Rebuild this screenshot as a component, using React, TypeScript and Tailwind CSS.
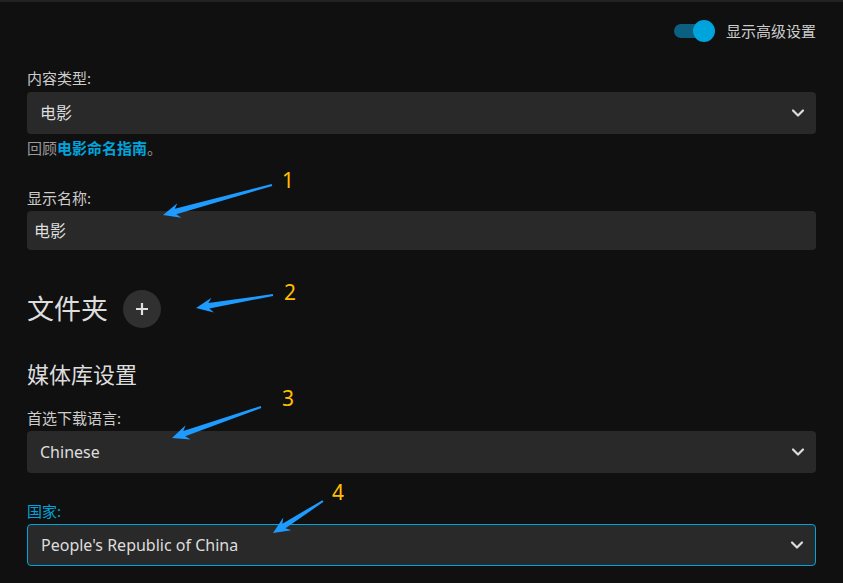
import { ChevronDown } from 'lucide-react';

const font = { fontFamily: '"Noto Sans", "Noto Sans CJK SC", sans-serif' };

interface Arrow {
  tail: [number, number];
  tip: [number, number];
  label: string;
  lx: number;
  ly: number;
}

const arrows: Arrow[] = [
  { tail: [272, 185], tip: [163, 215], label: '1', lx: 282, ly: 188 },
  { tail: [273, 295], tip: [196, 308], label: '2', lx: 284, ly: 300 },
  { tail: [261, 407], tip: [172, 438], label: '3', lx: 282, ly: 406 },
  { tail: [323, 501], tip: [273, 533], label: '4', lx: 332, ly: 500 },
];

function ArrowShape({ a }: { a: Arrow }) {
  const dx = a.tip[0] - a.tail[0];
  const dy = a.tip[1] - a.tail[1];
  const len = Math.sqrt(dx * dx + dy * dy);
  const angle = (Math.atan2(dy, dx) * 180) / Math.PI;
  const pts = [
    [0, -1],
    [len - 13, -2.8],
    [len - 17, -7.5],
    [len, 0],
    [len - 17, 7.5],
    [len - 13, 2.8],
    [0, 1],
  ]
    .map((p) => p.join(','))
    .join(' ');
  return (
    <g>
      <polygon points={pts} fill="#1e9bff" transform={`translate(${a.tail[0]} ${a.tail[1]}) rotate(${angle})`} />
      <text x={a.lx} y={a.ly} fill="#ffbf00" fontSize="21" fontFamily='"Noto Sans", sans-serif'>
        {a.label}
      </text>
    </g>
  );
}

function Select({ value, active }: { value: string; active?: boolean }) {
  return (
    <div
      className={`mt-[3px] h-[42px] rounded-[4px] bg-[#292929] flex items-center justify-between pl-[13px] pr-[8px] text-[16px] text-[#dddddd] ${
        active ? 'border border-[#00a4dc]' : ''
      }`}
    >
      <span>{value}</span>
      <ChevronDown size={20} strokeWidth={2.6} className="text-[#dddddd]" />
    </div>
  );
}

export default function App() {
  return (
    <div className="relative w-[843px] h-[583px] overflow-hidden bg-[#101010] text-[#d6d6d6]" style={font}>
      <div className="h-[2px] bg-[#222222]"></div>
      <div className="px-[27px] flex flex-col">
        <div className="mt-[18px] h-[22px] flex items-center justify-end gap-[11px]">
          <div className="relative w-[42px] h-[22px] flex items-center">
            <div className="w-[36px] h-[14px] ml-[1px] rounded-full bg-[#0b5f80]"></div>
            <div className="absolute right-[0px] top-0 w-[22px] h-[22px] rounded-full bg-[#00a4dc]"></div>
          </div>
          <span className="text-[15px] leading-[20px] text-[#cccccc]">显示高级设置</span>
        </div>

        <div className="mt-[26px] h-[20px] text-[15px] leading-[20px] text-[#cccccc]">内容类型:</div>
        <div className="mt-[4px] h-[42px] rounded-[4px] bg-[#292929] flex items-center justify-between pl-[13px] pr-[8px] text-[16px] text-[#dddddd]">
          <span>电影</span>
          <ChevronDown size={20} strokeWidth={2.6} className="text-[#dddddd]" />
        </div>
        <div className="mt-[4px] h-[20px] text-[15px] leading-[20px] text-[#999999]">
          回顾<span className="font-bold text-[#00a4dc]">电影命名指南</span>。
        </div>

        <div className="mt-[30px] h-[20px] text-[15px] leading-[20px] text-[#cccccc]">显示名称:</div>
        <div className="mt-[3px] h-[39px] rounded-[4px] bg-[#292929] flex items-center pl-[7px] text-[16px] text-[#dddddd]">
          电影
        </div>

        <div className="mt-[40px] h-[38px] flex items-center gap-[15px]">
          <span className="text-[27px] leading-[38px] text-[#dddddd]">文件夹</span>
          <div className="w-[38px] h-[38px] rounded-full bg-[#303030] flex items-center justify-center">
            <svg width="14" height="14" viewBox="0 0 14 14">
              <path d="M7 1v12M1 7h12" stroke="#e0e0e0" strokeWidth="2.2" />
            </svg>
          </div>
        </div>

        <div className="mt-[31px] h-[30px] text-[22px] leading-[30px] text-[#dddddd]">媒体库设置</div>

        <div className="mt-[19px] h-[20px] text-[15px] leading-[20px] text-[#cccccc]">首选下载语言:</div>
        <Select value="Chinese" />

        <div className="mt-[28px] h-[20px] text-[15px] leading-[20px] text-[#00a4dc]">国家:</div>
        <Select value="People's Republic of China" active />
      </div>

      <svg className="absolute inset-0 pointer-events-none" width="843" height="583">
        {arrows.map((a) => (
          <ArrowShape key={a.label} a={a} />
        ))}
      </svg>
    </div>
  );
}
